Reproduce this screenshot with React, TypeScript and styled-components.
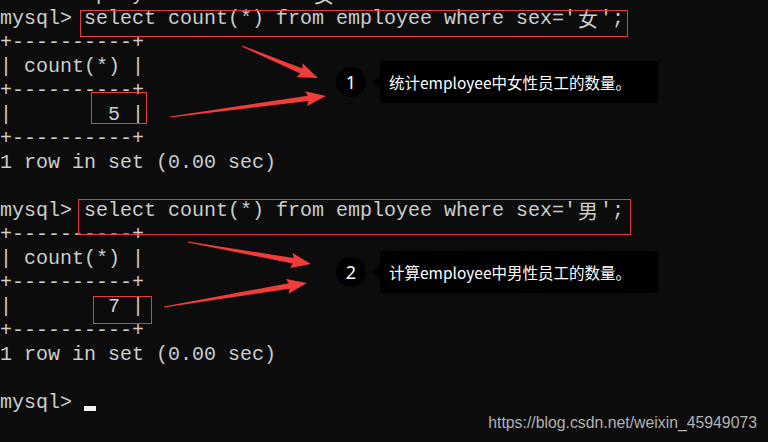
import React from "react";
import styled, { createGlobalStyle } from "styled-components";

const Global = createGlobalStyle`
  html, body { margin: 0; padding: 0; background: #0c0c0c; }
  #root { width: 768px; height: 442px; }
`;

const Stage = styled.div`
  position: relative;
  width: 768px;
  height: 442px;
  overflow: hidden;
  background: #0c0c0c;
`;

const Terminal = styled.pre`
  margin: -17px 0 0 0;
  padding: 0;
  font-family: "Liberation Mono", monospace;
  font-size: 20px;
  line-height: 24px;
  color: #cccccc;
  white-space: pre;
`;

const Line = styled.div`
  height: 24px;
`;

const Wide = styled.span`
  display: inline-block;
  width: 24px;
  text-align: center;
  font-family: "Noto Sans CJK SC", "Liberation Serif", serif;
  font-size: 20px;
  line-height: 24px;
  vertical-align: top;
`;

const Cursor = styled.span`
  display: inline-block;
  width: 12px;
  height: 5px;
  background: #f2f2f2;
  vertical-align: -3px;
`;

const RedBox = styled.div<{ $l: number; $t: number; $w: number; $h: number }>`
  position: absolute;
  left: ${(p) => p.$l}px;
  top: ${(p) => p.$t}px;
  width: ${(p) => p.$w}px;
  height: ${(p) => p.$h}px;
  box-sizing: border-box;
  border: 1.5px solid #e8393c;
`;

const Note = styled.div<{ $t: number }>`
  position: absolute;
  left: 336px;
  top: ${(p) => p.$t}px;
  display: flex;
  align-items: center;
  gap: 14px;
`;

const Badge = styled.div`
  width: 30px;
  height: 30px;
  border-radius: 50%;
  background: #000;
  color: #fff;
  display: flex;
  align-items: center;
  justify-content: center;
  font-family: "Noto Sans", "Liberation Sans", sans-serif;
  font-size: 18px;
`;

const Bubble = styled.div`
  position: relative;
  width: 278px;
  height: 42px;
  box-sizing: border-box;
  padding-left: 9px;
  background: #000;
  border-radius: 3px;
  display: flex;
  align-items: center;
  color: #fff;
  font-family: "Noto Sans CJK SC", "Noto Sans", sans-serif;
  font-size: 15.5px;
  &::before {
    content: "";
    position: absolute;
    left: -7px;
    top: 14px;
    border-style: solid;
    border-width: 7px 7px 7px 0;
    border-color: transparent #000 transparent transparent;
  }
`;

const Watermark = styled.div`
  position: absolute;
  right: 11px;
  bottom: 10px;
  font-family: "Liberation Sans", Arial, sans-serif;
  font-size: 15.8px;
  color: #b2b2b2;
`;

const ArrowLayer = styled.svg`
  position: absolute;
  left: 0;
  top: 0;
  pointer-events: none;
`;

type Pt = [number, number];

function arrowPoints(tail: Pt, tip: Pt, L = 18, H = 7.5, w = 5.5): string {
  const dx = tip[0] - tail[0];
  const dy = tip[1] - tail[1];
  const len = Math.hypot(dx, dy);
  const d = [dx / len, dy / len];
  const n = [-d[1], d[0]];
  const B = [tip[0] - d[0] * L, tip[1] - d[1] * L];
  const back = [B[0] - d[0] * 2, B[1] - d[1] * 2];
  const pts: number[][] = [
    [tail[0] + n[0] * 0.6, tail[1] + n[1] * 0.6],
    [B[0] + (n[0] * w) / 2, B[1] + (n[1] * w) / 2],
    [back[0] + n[0] * H, back[1] + n[1] * H],
    [tip[0], tip[1]],
    [back[0] - n[0] * H, back[1] - n[1] * H],
    [B[0] - (n[0] * w) / 2, B[1] - (n[1] * w) / 2],
    [tail[0] - n[0] * 0.6, tail[1] - n[1] * 0.6],
  ];
  return pts.map((p) => `${p[0].toFixed(1)},${p[1].toFixed(1)}`).join(" ");
}

const arrows: [Pt, Pt][] = [
  [[242, 46], [318, 78]],
  [[170, 117], [326, 96]],
  [[188, 242], [311, 264]],
  [[164, 307], [307, 283]],
];

const border = "+----------+";

function Query({ ch }: { ch: string }) {
  return (
    <Line>
      {"mysql> select count(*) from employee where sex='"}
      <Wide>{ch}</Wide>
      {"';"}
    </Line>
  );
}

function ResultTable({ value }: { value: string }) {
  return (
    <>
      <Line>{border}</Line>
      <Line>{"| count(*) |"}</Line>
      <Line>{border}</Line>
      <Line>{`|        ${value} |`}</Line>
      <Line>{border}</Line>
      <Line>{"1 row in set (0.00 sec)"}</Line>
      <Line />
    </>
  );
}

export default function App() {
  return (
    <>
      <Global />
      <Stage>
        <Terminal>
          <Line>
            {" from employee where sex='"}
            <Wide>女</Wide>
            {"'   at line 1"}
          </Line>
          <Query ch="女" />
          <ResultTable value="5" />
          <Query ch="男" />
          <ResultTable value="7" />
          <Line>
            {"mysql> "}
            <Cursor />
          </Line>
        </Terminal>

        <RedBox $l={80} $t={10} $w={548} $h={27} />
        <RedBox $l={91} $t={92} $w={56} $h={32} />
        <RedBox $l={78} $t={199} $w={553} $h={36} />
        <RedBox $l={93} $t={296} $w={59} $h={28} />

        <ArrowLayer width={768} height={442} viewBox="0 0 768 442">
          {arrows.map(([a, b], i) => (
            <polygon key={i} points={arrowPoints(a, b)} fill="#f23b3b" />
          ))}
        </ArrowLayer>

        <Note $t={61}>
          <Badge>1</Badge>
          <Bubble>统计employee中女性员工的数量。</Bubble>
        </Note>
        <Note $t={251}>
          <Badge>2</Badge>
          <Bubble>计算employee中男性员工的数量。</Bubble>
        </Note>

        <Watermark>https://blog.csdn.net/weixin_45949073</Watermark>
      </Stage>
    </>
  );
}
